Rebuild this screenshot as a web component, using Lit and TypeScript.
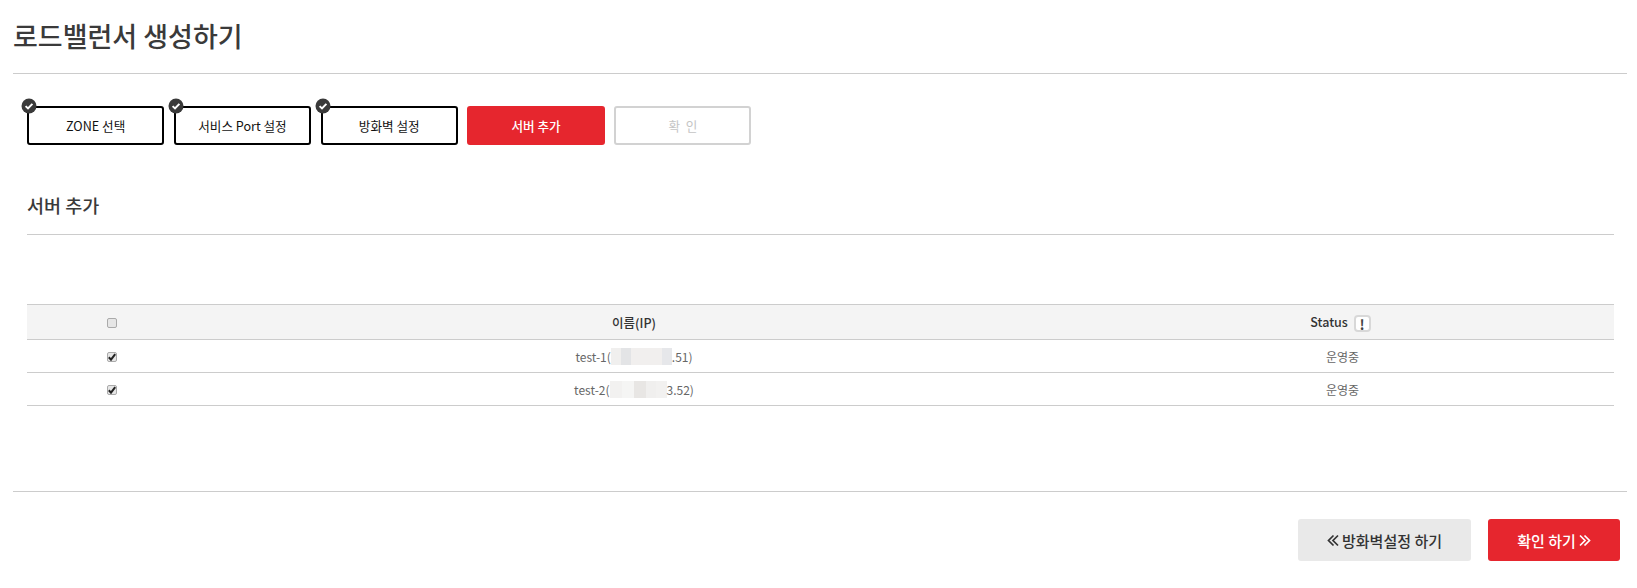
import { LitElement, html, css, svg } from "lit";
import { customElement } from "lit/decorators.js";

const check = svg`<svg class="chk" width="16" height="16" viewBox="0 0 16 16"><circle cx="8" cy="8" r="7.500" fill="#3a3a3a"/><path d="M4.600 8.100 7 10.400 11.400 5.900" fill="none" stroke="#fff" stroke-width="2"/></svg>`;
const chevL = svg`<svg class="chev" width="12" height="13" viewBox="0 0 12 13"><path d="M6.500 1.500 1.500 6.500l5 5M11 1.500 6 6.500l5 5" fill="none" stroke="currentColor" stroke-width="1.700"/></svg>`;
const chevR = svg`<svg class="chev" width="12" height="13" viewBox="0 0 12 13"><path d="M1 1.500l5 5-5 5M5.500 1.500l5 5-5 5" fill="none" stroke="currentColor" stroke-width="1.700"/></svg>`;
const tick = svg`<svg width="10" height="10" viewBox="0 0 10 10"><path d="M1.800 5.200 4 7.600 8.200 2.200" fill="none" stroke="#222" stroke-width="2"/></svg>`;

const rows = [
  { name: "test-1(", tail: ".51)", blur: [[10, "#f0efee"], [10, "#e3e4e6"], [31, "#f1efee"], [10, "#e6e7ea"]] },
  { name: "test-2(", tail: "3.52)", blur: [[12, "#f2f1f0"], [12, "#f5f5f4"], [12, "#e8e6e4"], [10, "#f0efee"], [11, "#f2f1f0"]] },
] as { name: string; tail: string; blur: [number, string][] }[];

@customElement("app-root")
export class AppRoot extends LitElement {
  static styles = css`
    :host { display: block; background: #fff; font-family: "Noto Sans CJK KR", "Noto Sans", sans-serif; color: #333; height: 588px; overflow: hidden; }
    .page { padding: 0 10px 0 13px; }
    h1 { margin: 0; height: 74px; box-sizing: border-box; border-bottom: 1px solid #ccc; font-size: 27px; font-weight: 500; line-height: 72px; color: #3a3a3a; }
    .inner { padding: 0 13px 0 14px; }
    .steps { display: flex; gap: 9.500px; padding-top: 32px; }
    .step { position: relative; box-sizing: border-box; width: 137.300px; height: 39px; border: 2px solid #000; border-radius: 3px; font-size: 12.600px; color: #111; display: flex; align-items: center; justify-content: center; background: #fff; }
    .step.active { background: #e6262e; border-color: #e6262e; color: #fff; font-weight: 500; }
    .step.todo { border-color: #d2d2d2; color: #c4c4c4; white-space: pre; }
    .chk { position: absolute; left: -8px; top: -10px; }
    h2 { margin: 0; height: 90px; box-sizing: border-box; border-bottom: 1px solid #ccc; padding-top: 47px; font-size: 18.500px; font-weight: 500; line-height: 26px; color: #3a3a3a; }
    table { width: 100%; border-collapse: collapse; margin-top: 69px; table-layout: fixed; font-size: 12px; }
    th, td { text-align: center; padding: 0; border-bottom: 1px solid #ccc; }
    thead th { height: 34px; background: #f4f4f4; border-top: 1px solid #ccc; font-size: 12.500px; font-weight: 500; color: #333; }
    tbody td { height: 32px; color: #666; }
    .c1 { width: 170px; }
    .c2 { width: 874px; }
    .c3 { padding-right: 4px; }
    .cb { display: inline-flex; box-sizing: border-box; width: 10px; height: 10px; border: 1px solid #aaa; border-radius: 2px; background: #e6e6e6; vertical-align: middle; align-items: center; justify-content: center; position: relative; top: -1px; }
    .cb svg { flex: none; }
    .cell-name { display: inline-flex; align-items: center; }
    .blur { display: inline-flex; height: 17px; }
    .blur i { display: block; height: 100%; }
    .info { display: inline-flex; align-items: center; justify-content: center; box-sizing: border-box; width: 17px; height: 17px; border: 2px solid #d8d8d8; border-radius: 4px; margin-left: 3px; font-size: 14px; font-weight: 700; color: #444; background: #fff; vertical-align: middle; line-height: 1; }
    .foot { margin-top: 85px; border-top: 1px solid #ccc; padding: 27px 7px 0 0; display: flex; justify-content: flex-end; gap: 17px; }
    .btn { box-sizing: border-box; height: 42px; border: 0; border-radius: 3px; font: 500 15px "Noto Sans CJK KR", "Noto Sans", sans-serif; display: flex; align-items: center; justify-content: center; gap: 3px; padding: 0; }
    .back { width: 173px; background: #e9e9e9; color: #333; }
    .next { width: 132px; background: #e6262e; color: #fff; }
  `;

  render() {
    return html`<div class="page">
      <h1>로드밸런서 생성하기</h1>
      <div class="inner">
        <div class="steps">
          <div class="step">${check}ZONE 선택</div>
          <div class="step">${check}서비스 Port 설정</div>
          <div class="step">${check}방화벽 설정</div>
          <div class="step active">서버 추가</div>
          <div class="step todo">확  인</div>
        </div>
        <h2>서버 추가</h2>
        <table>
          <thead><tr>
            <th class="c1"><span class="cb" role="checkbox" aria-checked="false"></span></th>
            <th class="c2">이름(IP)</th>
            <th class="c3">Status <span class="info">!</span></th>
          </tr></thead>
          <tbody>
            ${rows.map((r) => html`<tr>
              <td><span class="cb" role="checkbox" aria-checked="true">${tick}</span></td>
              <td><span class="cell-name">${r.name}<span class="blur">${r.blur.map(([w, c]) => html`<i style="width:${w}px;background:${c}"></i>`)}</span>${r.tail}</span></td>
              <td>운영중</td>
            </tr>`)}
          </tbody>
        </table>
      </div>
      <div class="foot">
        <button class="btn back">${chevL}방화벽설정 하기</button>
        <button class="btn next">확인 하기${chevR}</button>
      </div>
    </div>`;
  }
}
